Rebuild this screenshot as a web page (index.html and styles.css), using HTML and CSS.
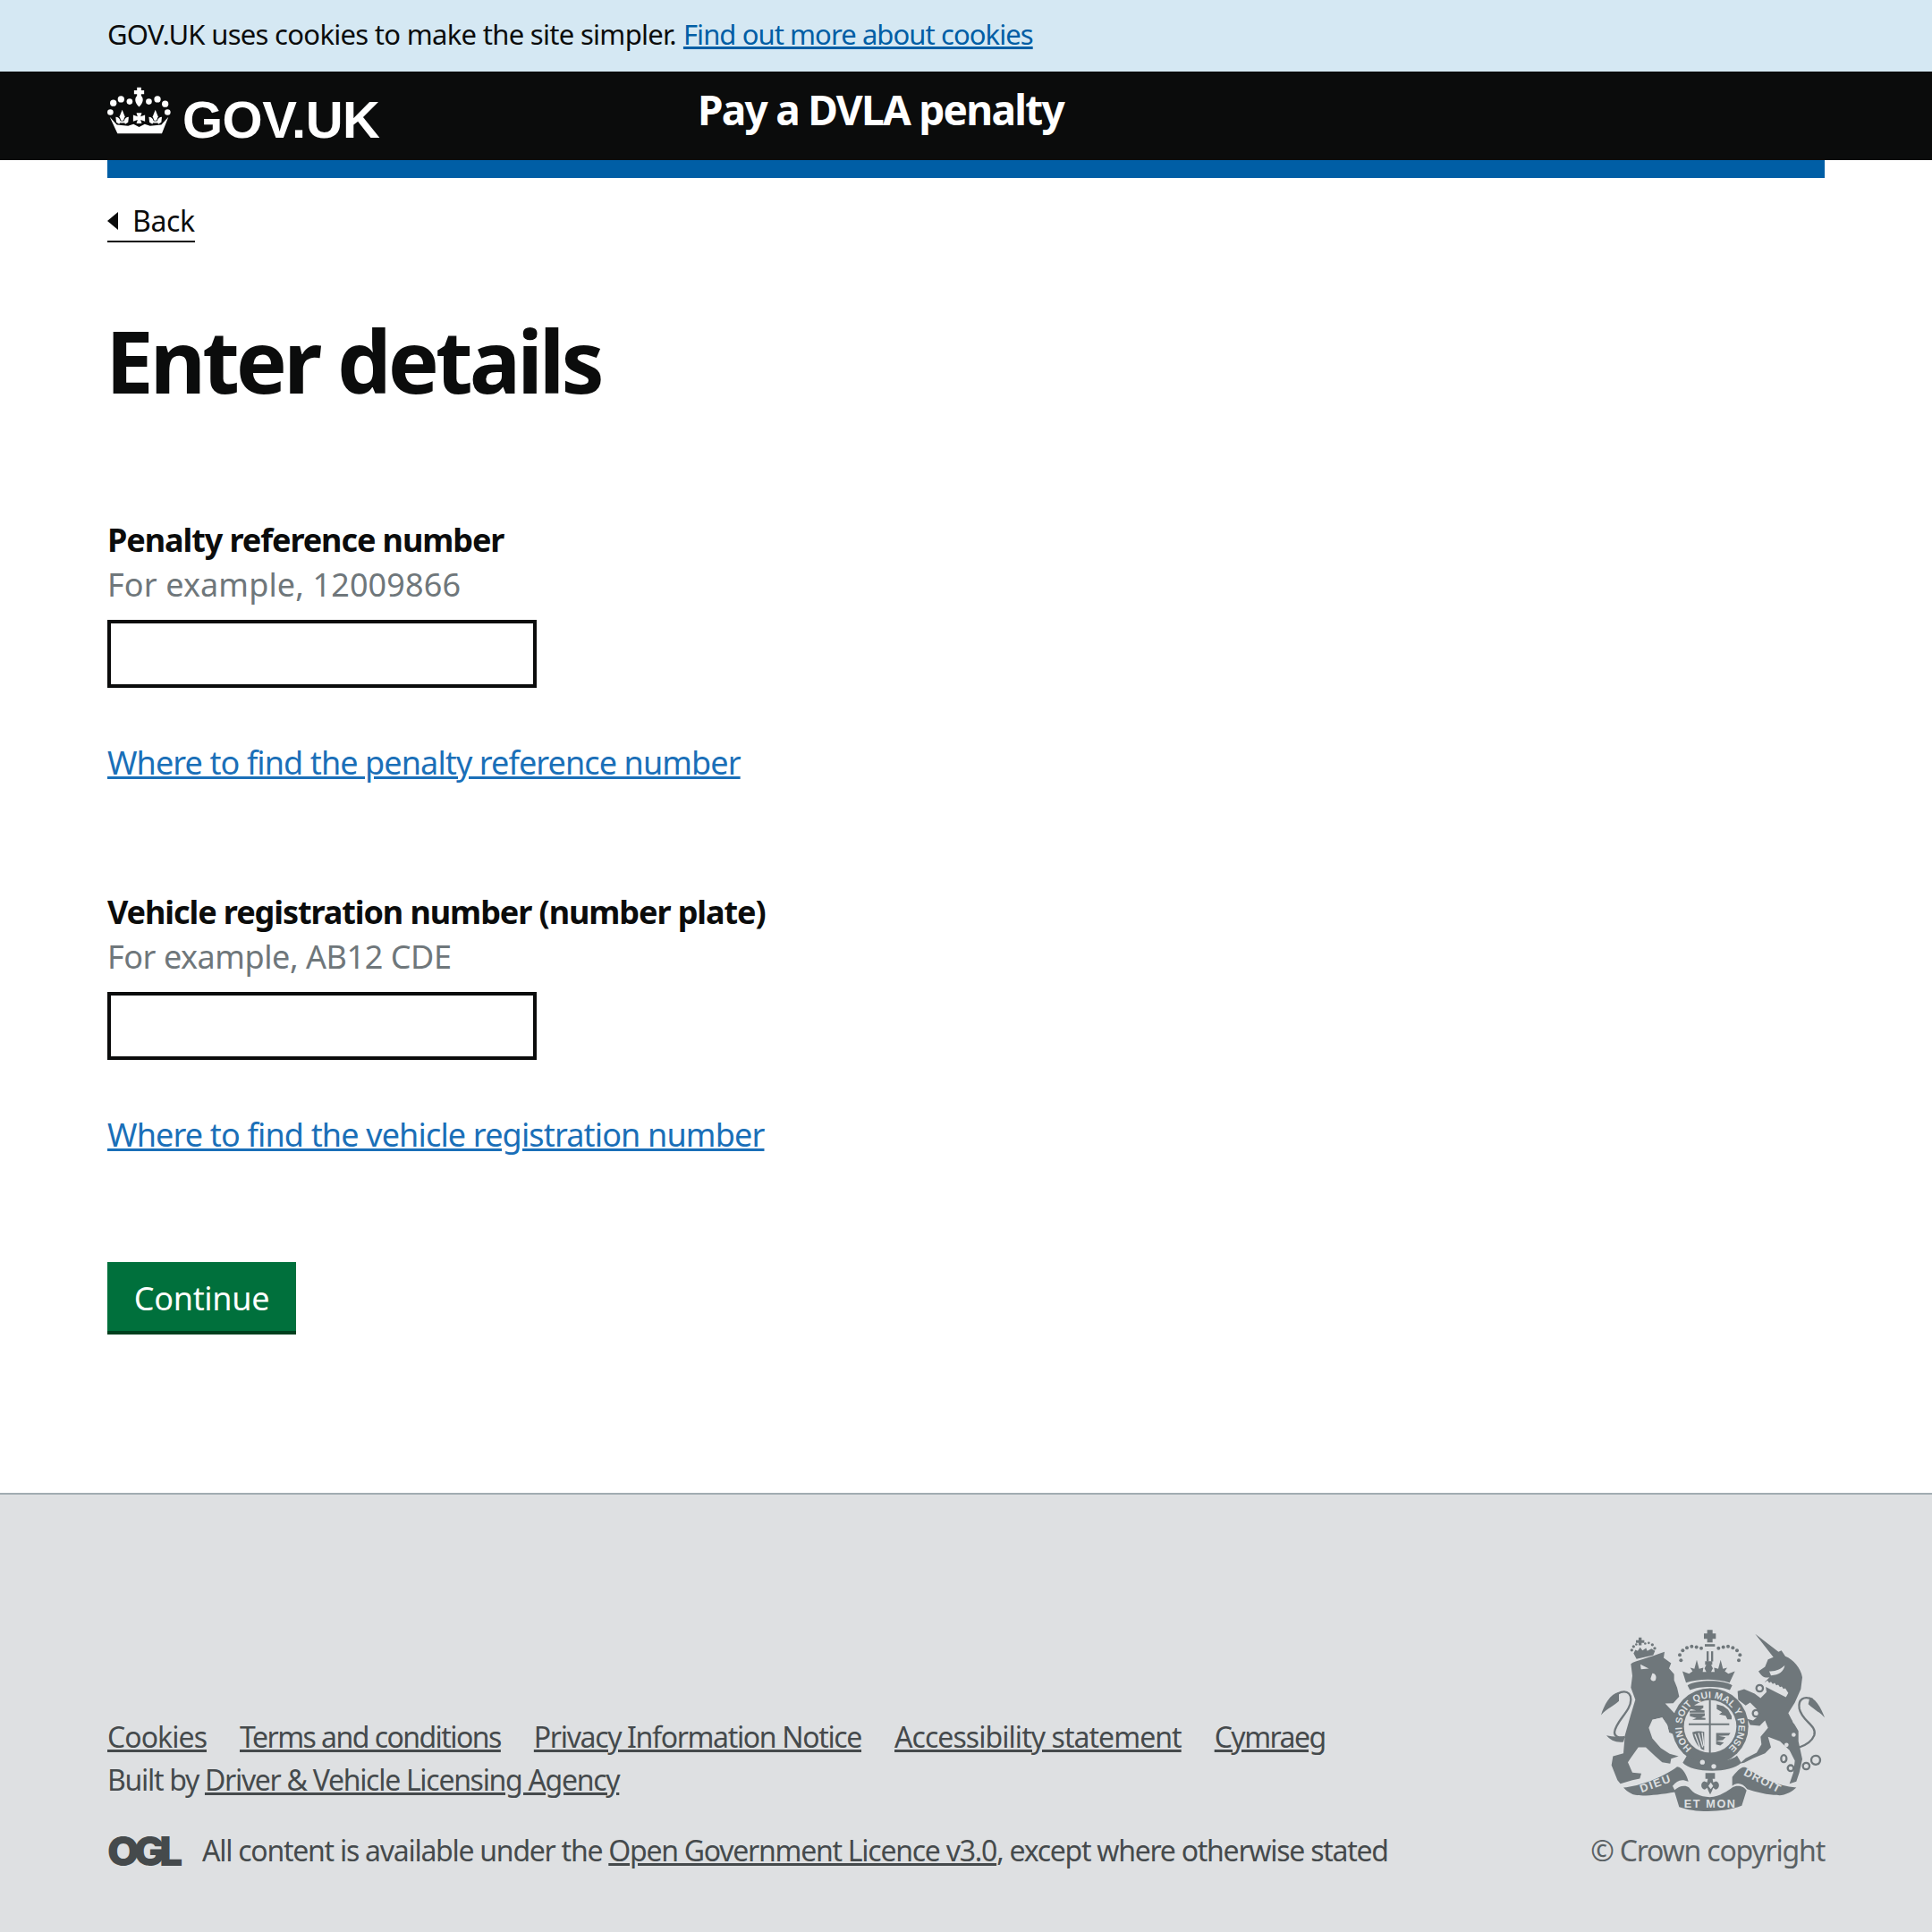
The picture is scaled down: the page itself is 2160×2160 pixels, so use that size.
FILE: index.html
```html
<!DOCTYPE html>
<html lang="en">
<head>
    <meta charset="UTF-8">
    <title>Enter details - Pay a DVLA penalty</title>
    <link rel="stylesheet" href="styles.css">
</head>
<body>
    <div class="cookie-bar">
        <p class="cookie-text"><span class="cookie-msg">GOV.UK uses cookies to make the site simpler.</span> <a href="#" class="cookie-link">Find out more about cookies</a></p>
    </div>

    <header class="site-header">
        <a href="#" class="logo">
            <svg class="crown" viewBox="30 20 220 160" aria-hidden="true">
                <defs>
                    <g id="fleur">
                        <path d="M80 98L89 120 84 134H76L71 120Z"/>
                        <path d="M58 122C66 122 72 128 74 136L70 146 60 140Z"/>
                        <path d="M102 122C94 122 88 128 86 136L90 146 100 140Z"/>
                        <path d="M70 136H90V142H70Z"/>
                    </g>
                </defs>
                <g fill="#fff">
                    <path d="M130 22h14v10h10v13h-10v5c9 9 8 24-7 38c-15-14-16-29-7-38v-5h-10v-13h10z"/>
                    <circle cx="76" cy="62" r="11"/><circle cx="50" cy="75" r="11"/><circle cx="105" cy="70" r="10"/>
                    <circle cx="170" cy="70" r="10"/><circle cx="199" cy="62" r="11"/><circle cx="225" cy="78" r="11"/>
                    <circle cx="40" cy="106" r="10"/><circle cx="233" cy="106" r="10"/>
                    <use href="#fleur"/>
                    <use href="#fleur" x="112"/>
                    <path d="M128 108h18l-4 12 15-5v22l-15-5 4 12h-18l4-12-15 5v-22l15 5z"/>
                    <path d="M38 122L62 148 100 152 118 146 137 156 156 146 174 152 212 148 236 122 214 178H64Z"/>
                </g>
            </svg>
            <span class="logo-text">GOV.UK</span>
        </a>
        <a href="#" class="service-name">Pay a DVLA penalty</a>
    </header>

    <main class="page">
        <div class="stripe"></div>
        <a href="#" class="back-link"><span class="back-arrow"></span>Back</a>

        <h1 class="title">Enter details</h1>

        <form class="details-form">
            <div class="field">
                <label class="field-label" for="ref">Penalty reference number</label>
                <span class="hint hint-ref">For example, 12009866</span>
                <input class="text-input" type="text" id="ref">
                <a href="#" class="help-link link-ref">Where to find the penalty reference number</a>
            </div>
            <div class="field">
                <label class="field-label" for="vrn">Vehicle registration number (number plate)</label>
                <span class="hint hint-vrn">For example, AB12 CDE</span>
                <input class="text-input" type="text" id="vrn">
                <a href="#" class="help-link link-vrn">Where to find the vehicle registration number</a>
            </div>
            <button type="submit" class="button">Continue</button>
        </form>
    </main>

    <footer class="site-footer">
        <div class="footer-left">
            <ul class="footer-links">
                <li><a href="#">Cookies</a></li>
                <li><a href="#">Terms and conditions</a></li>
                <li><a href="#">Privacy Information Notice</a></li>
                <li><a href="#">Accessibility statement</a></li>
                <li><a href="#">Cymraeg</a></li>
            </ul>
            <p class="built-by">Built by <a href="#">Driver &amp; Vehicle Licensing Agency</a></p>
            <div class="licence">
                <span class="ogl">OGL</span>
                <p class="licence-text">All content is available under the <a href="#">Open Government Licence v3.0</a>, except where otherwise stated</p>
            </div>
        </div>
        <div class="footer-right">
            <svg class="crest" viewBox="90 60 750 620" aria-hidden="true">
                <defs>
                    <path id="garter" d="M395 463A95 95 0 1 1 517 463"/>
                </defs>
                <g class="crest-dark">
                    <!-- kroon boven schild -->
                    <path d="M446 66h18v12h11v18h-11v12h-18v-12h-11v-18h11z"/>
                    <rect x="438" y="114" width="34" height="8"/>
                    <rect x="444" y="138" width="7" height="34"/>
                    <rect x="459" y="138" width="7" height="34"/>
                    <circle cx="358" cy="168" r="6"/><circle cx="354" cy="150" r="6"/><circle cx="364" cy="135" r="6"/><circle cx="378" cy="126" r="6"/><circle cx="394" cy="122" r="6"/><circle cx="410" cy="124" r="6"/><circle cx="426" cy="128" r="6"/>
                    <circle cx="484" cy="128" r="6"/><circle cx="500" cy="124" r="6"/><circle cx="516" cy="122" r="6"/><circle cx="532" cy="126" r="6"/><circle cx="546" cy="135" r="6"/><circle cx="556" cy="150" r="6"/><circle cx="552" cy="168" r="6"/>
                    <path d="M363 205l22 8 12-8-8-12 14 4 8-30 8 30 14-4-2 14 12 0-6-12 6-12h-4v-12h24v12h-4l6 12-6 12 12 0-2-14 14 4 8-30 8 30 14-4-8 12 12 8 22-8-18 38c-40-14-106-14-146 0z"/>
                    <path d="M380 252c28-20 122-20 150 0l-8 16c-34-14-100-14-134 0z"/>
                    <!-- kroon leeuw -->
                    <path d="M216 92h10v9h9v9h-9v8h-10v-8h-9v-9h9z"/>
                    <circle cx="199" cy="122" r="5"/><circle cx="208" cy="115" r="4"/><circle cx="193" cy="134" r="5"/><circle cx="238" cy="112" r="4"/><circle cx="250" cy="110" r="4"/><circle cx="262" cy="116" r="5"/><circle cx="270" cy="128" r="5"/>
                    <path d="M199 145l6-12 8 4 8-12 8 10 12-8 4 10 14-8 12 8-6 14-56 13z"/>
                    <!-- leeuw -->
                    <path d="M190 180C205 170 250 160 303 140L300 160 325 178 318 195 335 215 335 235 345 260 352 290 332 312 305 313 345 355 362 390 350 412 330 415 318 410 312 385 295 360 262 368 250 395 262 430 290 462 320 482 350 490 325 498 322 515 295 510 272 490 240 460 215 460 190 495 180 510 195 545 225 548 220 565 195 570 155 582 145 570 125 520 130 490 165 480 170 420 190 350 205 300 190 260 195 220Z"/>
                    <path d="M150 275C120 280 100 320 90 352 110 330 135 320 150 305Z"/>
                    <path d="M108 420C130 425 160 425 170 425L165 442C140 445 120 435 108 420Z"/>
                    <!-- eenhoorn -->
                    <path d="M607 80L685 140 695 135 708 155C735 165 760 195 765 225L760 265 740 310 718 345 728 365 752 405 752 440 765 500 755 545 745 575 722 582 735 545 740 505 722 470 690 440 650 425 660 460 640 480 600 497 570 512 555 515 575 497 612 478 628 450 625 425 650 395 640 370 622 388 590 385 580 365 600 370 618 355 615 335 590 310 575 320 550 300 548 272 570 265 605 280 625 295 645 275 640 240 655 225C640 228 630 225 618 205L640 190 650 165 668 158Z"/>
                    <path d="M790 292C815 300 830 335 840 360 820 340 800 330 785 315Z"/>
                    <!-- schild ring -->
                    <circle cx="456" cy="390" r="128"/>
                    <path d="M378 488c24 28 138 28 168 0l14 24c-36 38-168 34-196 0z"/>
                    <!-- lint -->
                    <path d="M165 595C220 590 300 560 345 525 365 525 380 560 383 575 360 565 345 570 330 590L340 610C280 620 230 625 205 620 185 615 175 605 165 595Z"/>
                    <path d="M530 560C560 520 570 525 580 530 620 560 680 590 745 595 730 610 700 625 680 620 650 620 610 610 580 600 565 580 545 575 530 590Z"/>
                    <path d="M335 605C350 590 372 585 385 595 400 615 420 625 455 627 490 625 515 605 530 595 545 585 570 590 578 605L562 656C500 680 405 680 352 660Z"/>
                    <!-- lelie -->
                    <path d="M440 546h32v20h-8l2 12 10-4c14 4 12 26-2 28l-8-6-4 10-6 12-6-12-4-10-8 6c-14-2-16-24-2-28l10 4 2-12h-8z"/>
                </g>
                <g class="crest-light">
                    <!-- schild -->
                    <circle cx="456" cy="390" r="88"/>
                    <circle cx="430" cy="510" r="8"/><circle cx="468" cy="524" r="8"/>
                    <circle cx="622" cy="262" r="7"/><circle cx="610" cy="346" r="7"/>
                    <circle cx="742" cy="372" r="9"/><circle cx="736" cy="418" r="7"/><circle cx="712" cy="452" r="7"/>
                    <path d="M222 182l28 14-26 2zM262 212c12 0 16 14 10 24-6 4-14 2-16-6z"/>
                    <path d="M654 205c20 2 42-8 52-20-2 20-20 34-46 34z"/>
                    <path d="M640 242l8-6 6 8 6-4 6 8 6-4 6 8 6-2 6 8 6-2 6 8 6-2 6 10 4 6-8 14-78-40z"/>
                    <path d="M458 578l8 12-8 10-8-10z"/>
                    <path d="M262 368l33-8 17 25 6 25-14-4-18 2-12-14z"/>
                </g>
                <g class="crest-dark">
                    <path d="M452 302h6v78h62v6h-62v100h-6v-100h-68v-6h68z"/>
                    <path d="M385 320h48v8l-10 6 14 2v8h-50v-6l22-2-24-6zM388 346h50v8l-12 6 14 2v6h-44l14-6-22-6zM478 316l22 6 16 12 12 22 0 10h-14l-6-12-22-4 10-8-18-10zM476 412h48l-6 8-34 2 24 4-10 10-22 2 26 6-12 10-14-4z"/>
                    <path d="M396 410c12-6 30-4 40-2v62c-18-4-34-30-40-60z"/>
                </g>
                <g class="crest-lines">
                    <path d="M405 416l18 48M417 412l14 48M429 410l6 46"/>
                </g>
                <g class="crest-stroke">
                    <path d="M130 300C150 265 190 265 190 300 190 340 140 370 135 410 135 425 150 430 170 425"/>
                    <path d="M800 300C770 285 750 300 755 330 765 375 815 385 805 420 795 445 770 455 755 460"/>
                    <circle cx="622" cy="262" r="11"/>
                    <circle cx="610" cy="346" r="11"/>
                    <ellipse cx="703" cy="498" rx="9" ry="12"/>
                    <circle cx="726" cy="530" r="10"/>
                    <circle cx="778" cy="523" r="11"/>
                    <circle cx="810" cy="503" r="15"/>
                </g>
                <g class="crest-words">
                    <text class="garter-text"><textPath href="#garter" textLength="464">HONI SOIT QUI MAL Y PENSE</textPath></text>
                    <text x="226" y="612" transform="rotate(-20 226 612)" textLength="105">DIEU</text>
                    <text x="368" y="662" textLength="172">ET MON</text>
                    <text x="566" y="552" transform="rotate(27 566 552)" textLength="132">DROIT</text>
                </g>
            </svg>
            <p class="copyright">© Crown copyright</p>
        </div>
    </footer>
</body>
</html>
```
FILE: styles.css
```css
body {
    margin: 0;
    padding: 0;
    font-family: "Noto Sans", Arial, sans-serif;
    color: #0b0c0c;
    background: #ffffff;
}
p {
    margin: 0;
}

/* cookie balk */
.cookie-bar {
    height: 80px;
    box-sizing: border-box;
    background: #d5e8f3;
    padding: 16px 120px 0;
}
.cookie-text {
    font-size: 31px;
    line-height: 44px;
    white-space: nowrap;
}
.cookie-msg {
    letter-spacing: -0.7px;
}
.cookie-link {
    color: #005ea5;
    letter-spacing: -0.93px;
}

/* header */
.site-header {
    height: 99px;
    background: #0b0c0c;
    padding: 0 120px;
    display: flex;
    align-items: flex-start;
}
.logo {
    display: flex;
    align-items: flex-start;
    color: #ffffff;
    text-decoration: none;
    width: 660px;
    flex-shrink: 0;
}
.crown {
    width: 73px;
    height: 53px;
    margin-top: 17px;
}
.logo-text {
    font-family: "Liberation Sans", Arial, sans-serif;
    font-weight: bold;
    font-size: 58px;
    line-height: 70px;
    margin: 19px 0 0 11px;
    letter-spacing: -0.5px;
}
.service-name {
    color: #ffffff;
    text-decoration: none;
    font-weight: bold;
    font-size: 46px;
    line-height: 60px;
    margin-top: 12px;
    letter-spacing: -1.75px;
    white-space: nowrap;
}

/* inhoud */
.page {
    padding: 0 120px;
    height: 1490px;
    box-sizing: border-box;
}
.stripe {
    height: 20px;
    background: #005ea5;
}
.back-link {
    display: inline-flex;
    align-items: center;
    margin-top: 26px;
    color: #0b0c0c;
    text-decoration: none;
    font-size: 32px;
    line-height: 44px;
    border-bottom: 2px solid #0b0c0c;
    letter-spacing: -0.4px;
}
.back-arrow {
    width: 0;
    height: 0;
    border-top: 10px solid transparent;
    border-bottom: 10px solid transparent;
    border-right: 12px solid #0b0c0c;
    margin-right: 16px;
}
.title {
    font-size: 96px;
    line-height: 120px;
    font-weight: bold;
    letter-spacing: -4px;
    margin: 72px 0 0 -2px;
}
.details-form {
    margin-top: 116px;
}
.field {
    display: flex;
    flex-direction: column;
    align-items: flex-start;
    margin-bottom: 117px;
}
.field-label {
    font-size: 36px;
    line-height: 50px;
    font-weight: bold;
    letter-spacing: -1.08px;
    white-space: nowrap;
}
.hint {
    font-size: 36px;
    line-height: 50px;
    color: #6f777b;
}
.hint-ref {
    letter-spacing: 0.12px;
}
.hint-vrn {
    letter-spacing: -0.45px;
}
.text-input {
    display: block;
    width: 480px;
    height: 76px;
    box-sizing: border-box;
    border: 4px solid #0b0c0c;
    margin: 14px 0 0;
    padding: 0;
    background: #ffffff;
    border-radius: 0;
}
.help-link {
    margin-top: 59px;
    color: #1a6fb8;
    font-size: 36px;
    line-height: 50px;
    white-space: nowrap;
}
.link-ref {
    letter-spacing: -0.9px;
}
.link-vrn {
    letter-spacing: -0.84px;
}
.button {
    display: block;
    width: 211px;
    height: 81px;
    border: none;
    border-bottom: 4px solid #00401e;
    border-radius: 0;
    background: #00703c;
    color: #ffffff;
    font-family: inherit;
    font-size: 36px;
    letter-spacing: -0.3px;
    padding: 3px 0 0;
    margin-top: 3px;
}

/* footer */
.site-footer {
    height: 491px;
    box-sizing: border-box;
    background: #dee0e2;
    border-top: 2px solid #a1acb2;
    padding: 0 120px;
    display: flex;
    justify-content: space-between;
    color: #454a4c;
    font-size: 32px;
    line-height: 44px;
}
.site-footer a {
    color: #454a4c;
}
.footer-left {
    padding-top: 249px;
}
.footer-links {
    list-style: none;
    margin: 0;
    padding: 0;
    display: flex;
    gap: 37px;
    white-space: nowrap;
}
.footer-links li:nth-child(1),
.footer-links li:nth-child(4) {
    letter-spacing: -0.95px;
}
.footer-links li:nth-child(2),
.footer-links li:nth-child(5) {
    letter-spacing: -1.55px;
}
.footer-links li:nth-child(3) {
    letter-spacing: -1.35px;
}
.built-by {
    margin-top: 4px;
    letter-spacing: -1.3px;
}
.licence {
    display: flex;
    align-items: center;
    margin-top: 35px;
}
.ogl {
    font-family: Inter, Arial, sans-serif;
    font-weight: 900;
    font-size: 46px;
    line-height: 44px;
    letter-spacing: -6px;
    width: 80px;
    margin-right: 26px;
}
.licence-text {
    letter-spacing: -1.26px;
    white-space: nowrap;
}
.footer-right {
    display: flex;
    flex-direction: column;
    align-items: flex-end;
    padding-top: 149px;
}
.crest {
    width: 250px;
    height: 207px;
    display: block;
}
.crest-dark {
    fill: #6f777b;
}
.crest-light {
    fill: #dee0e2;
}
.crest-lines {
    fill: none;
    stroke: #dee0e2;
    stroke-width: 4;
}
.crest-stroke {
    fill: none;
    stroke: #6f777b;
    stroke-width: 7;
}
.crest-words {
    font-family: "Liberation Sans", Arial, sans-serif;
    font-size: 38px;
    font-weight: bold;
    fill: #dee0e2;
}
.crest-words .garter-text {
    font-size: 32px;
}
.copyright {
    margin-top: 20px;
    color: #5a6164;
    letter-spacing: -1.2px;
    white-space: nowrap;
}
```
